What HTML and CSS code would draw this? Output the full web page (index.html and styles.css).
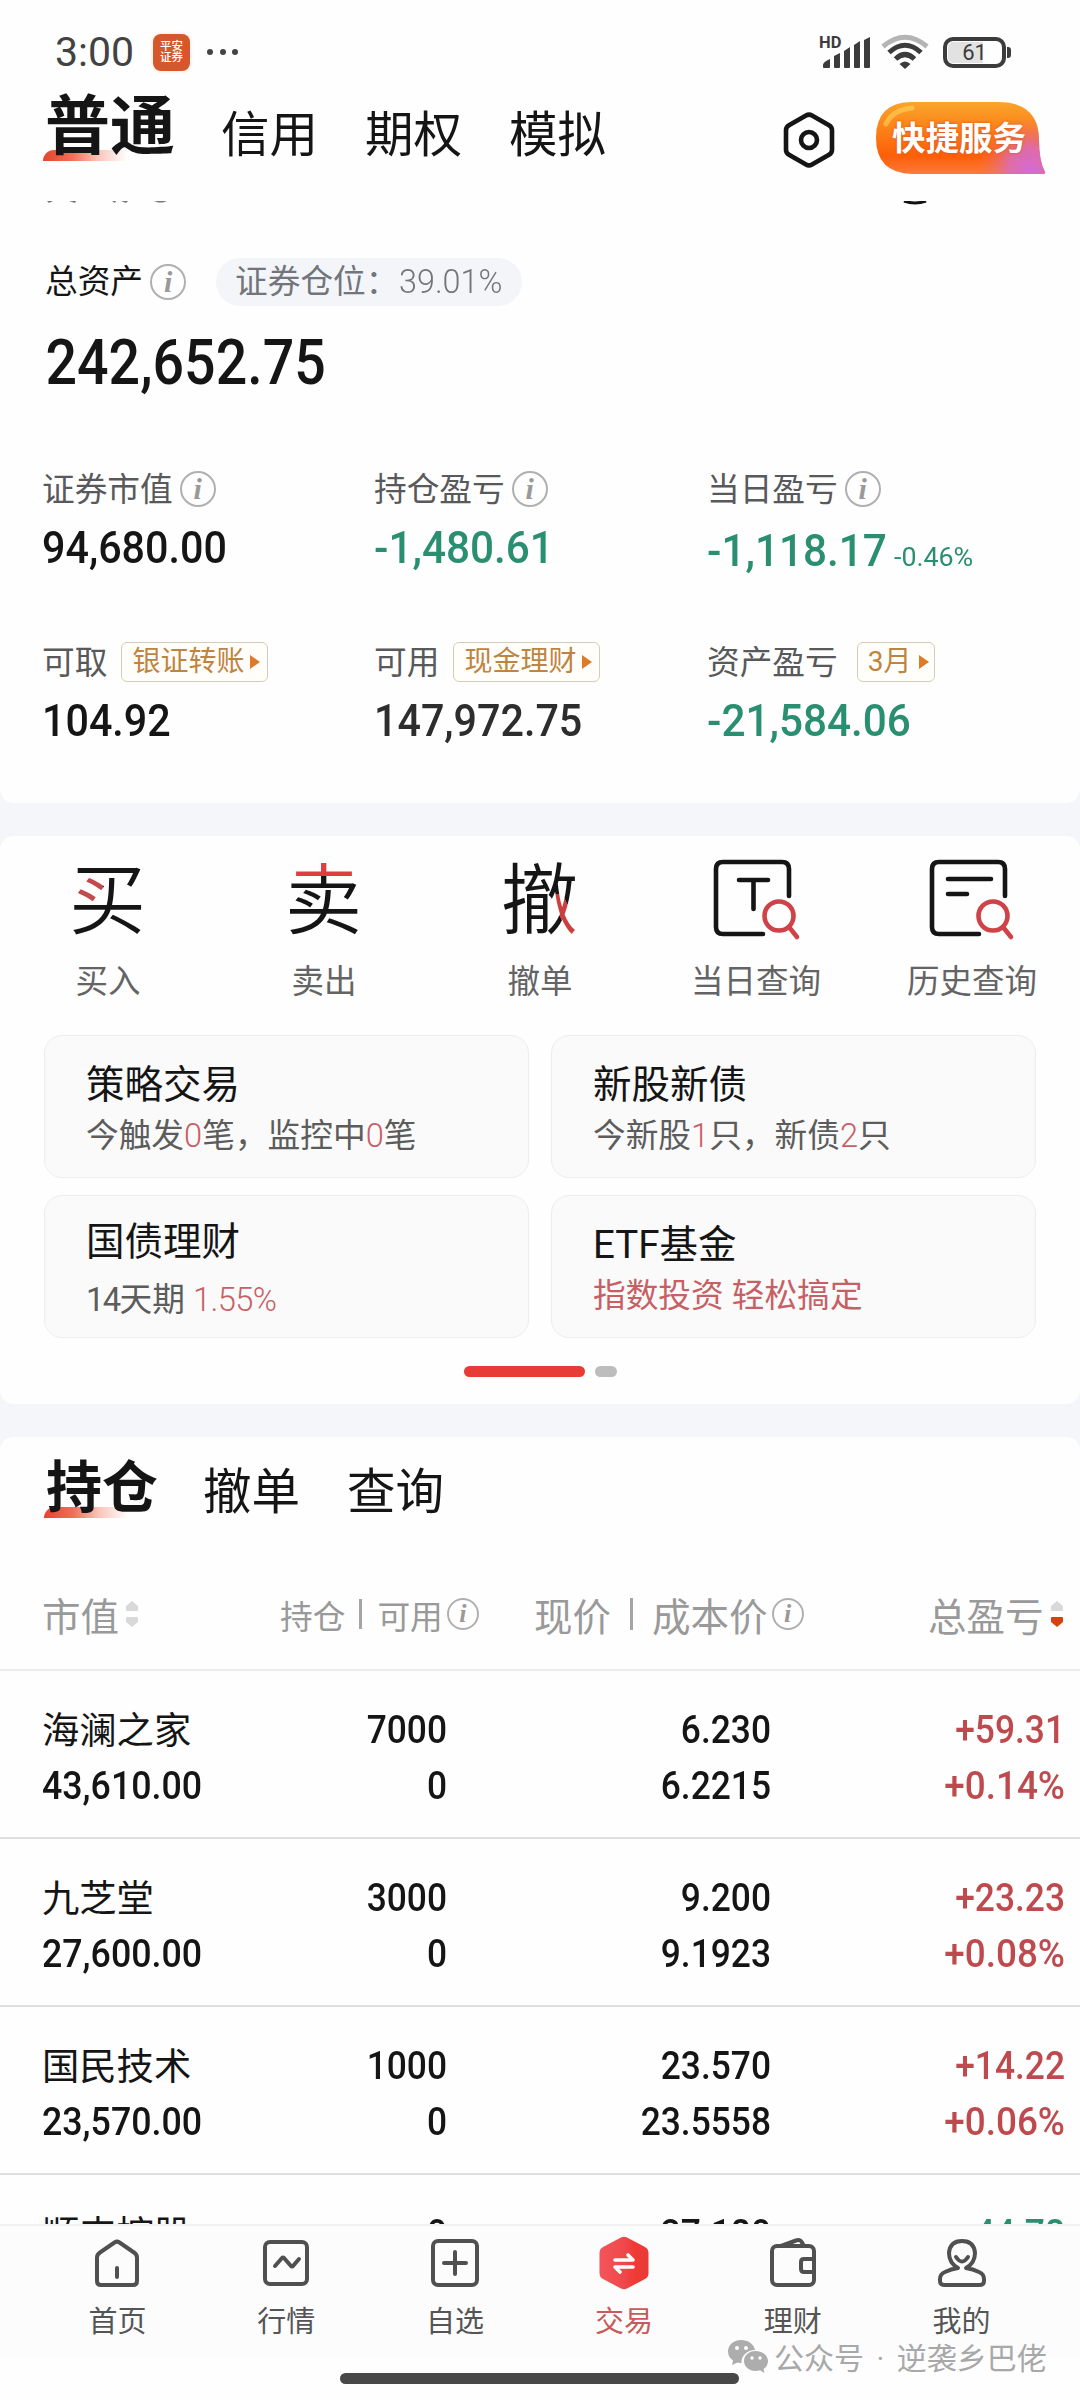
FILE: index.html
```html
<!DOCTYPE html>
<html lang="zh-CN">
<head>
<meta charset="utf-8">
<title>交易</title>
<link rel="stylesheet" href="styles.css">
</head>
<body>
<div class="phone">
  <header class="header">
    <div class="status">
      <span class="clock">3:00</span>
      <span class="app-icon"><span>平安</span><span>证券</span></span>
      <span class="more"><i></i><i></i><i></i></span>
      <span class="status-right">
        <svg class="signal" width="54" height="36" viewBox="0 0 54 36"><g fill="#3c3c3c"><path d="M4 31q0-3 7-6v8q0 1-1 1H5q-1 0-1-1zM15 22l6-3v14q0 1-1 1h-4q-1 0-1-1zM25 17l6-4v20q0 1-1 1h-4q-1 0-1-1zM35 11l6-4v26q0 1-1 1h-4q-1 0-1-1zM45 6l6-3v30q0 1-1 1h-4q-1 0-1-1z"/></g><text x="0" y="13.500" class="hd">HD</text></svg>
        <svg class="wifi" width="48" height="36" viewBox="0 0 48 36" fill="none" stroke-width="5"><path d="M2 12.500Q24-6 46 12.500" stroke="#b4b4b4"/><path d="M8 18.500Q24 4 40 18.500M14.500 25Q24 16 33.500 25" stroke="#3c3c3c"/><path d="M24 35l-5.500-5q5.500-5 11 0z" fill="#3c3c3c" stroke="none"/></svg>
        <span class="battery"><span>61</span></span>
      </span>
    </div>
    <nav class="account-tabs">
      <span class="tab tab-active">普通</span>
      <span class="tab">信用</span>
      <span class="tab">期权</span>
      <span class="tab">模拟</span>
      <svg class="hex" width="54" height="58" viewBox="0 0 54 58" fill="none" stroke="#151515" stroke-width="4.600"><path d="M24 4.500q3-1.700 6 0l17 9.700q3 1.700 3 5v19.600q0 3.300-3 5l-17 9.700q-3 1.700-6 0l-17-9.700q-3-1.700-3-5v-19.600q0-3.300 3-5z"/><circle cx="27" cy="29" r="8"/></svg>
      <span class="quick">
        <svg width="172" height="76" viewBox="0 0 172 76"><defs><linearGradient id="qa" x1="0" y1="0" x2="0" y2="1"><stop offset="0" stop-color="#f9a52c"/><stop offset=".35" stop-color="#fc8418"/><stop offset=".75" stop-color="#fd5f08"/><stop offset="1" stop-color="#fd7a3a"/></linearGradient><radialGradient id="qb" gradientUnits="userSpaceOnUse" cx="156" cy="68" r="52"><stop offset="0" stop-color="#d56ad0"/><stop offset=".4" stop-color="#da6cc0" stop-opacity=".85"/><stop offset="1" stop-color="#f07060" stop-opacity="0"/></radialGradient></defs><path d="M38 2H124Q165 2 165 40Q165 61 171 72Q172 74 168 74H38Q2 73 2 38Q2 2 38 2Z" fill="url(#qa)"/><path d="M38 2H124Q165 2 165 40Q165 61 171 72Q172 74 168 74H38Q2 73 2 38Q2 2 38 2Z" fill="url(#qb)"/><path d="M12 24Q18 10 38 8" fill="none" stroke="#ffd45e" stroke-width="5" stroke-linecap="round" opacity=".6"/></svg>
        <b>快捷服务</b>
      </span>
    </nav>
  </header>

  <main class="content">
    <section class="panel assets">
      <svg class="scrolled" width="1080" height="4" viewBox="0 0 1080 4"><path d="M47 0h6l-4 2zM69 0h7l-1 2zM112 0h4l-1 2zM121 0h7l-2 2zM154 0h13l-4 1.500h-5z" fill="#777"/><path d="M904 0Q915 4 926 0" fill="none" stroke="#111" stroke-width="3"/></svg>
      <div class="total-row"><span>总资产</span><i class="info">i</i><span class="pill">证券仓位：<span class="pill-num">39.01%</span></span></div>
      <div class="total num">242,652.75</div>
      <div class="stats">
        <div class="stat"><div class="label"><span>证券市值</span><i class="info">i</i></div><div class="value num">94,680.00</div></div>
        <div class="stat"><div class="label"><span>持仓盈亏</span><i class="info">i</i></div><div class="value num down">-1,480.61</div></div>
        <div class="stat"><div class="label"><span>当日盈亏</span><i class="info">i</i></div><div class="value-line"><span class="value num down">-1,118.17</span><span class="pct num down">-0.46%</span></div></div>
        <div class="stat"><div class="label"><span>可取</span><span class="tag">银证转账<i></i></span></div><div class="value num">104.92</div></div>
        <div class="stat"><div class="label"><span>可用</span><span class="tag">现金理财<i></i></span></div><div class="value num soft">147,972.75</div></div>
        <div class="stat"><div class="label"><span>资产盈亏</span><span class="tag tag-month">3月<i></i></span></div><div class="value num down">-21,584.06</div></div>
      </div>
    </section>

    <section class="panel trade">
      <div class="actions">
        <div class="action"><span class="glyph glyph-buy">买</span><span>买入</span></div>
        <div class="action"><span class="glyph glyph-sell">卖</span><span>卖出</span></div>
        <div class="action"><span class="glyph glyph-cancel">撤</span><span>撤单</span></div>
        <div class="action"><svg width="84" height="80" viewBox="0 0 84 80" fill="none" stroke-linecap="round" stroke-width="4.600"><path d="M75 36V9q0-7-7-7H9Q2 2 2 9v58q0 7 7 7h40M25 20h29M39.500 20v29" stroke="#151515"/><g stroke="#cf4247"><circle cx="65" cy="56" r="14.500"/><path d="M75 67l8 10"/></g></svg><span>当日查询</span></div>
        <div class="action"><svg width="84" height="80" viewBox="0 0 84 80" fill="none" stroke-linecap="round" stroke-width="4.600"><path d="M75 36V9q0-7-7-7H9Q2 2 2 9v58q0 7 7 7h40M18 19h43M18 34h19" stroke="#151515"/><g stroke="#cf4247"><circle cx="63" cy="56" r="14.500"/><path d="M73 67l8 10"/></g></svg><span>历史查询</span></div>
      </div>
      <div class="cards">
        <div class="card"><h3>策略交易</h3><p>今触发<em>0</em>笔，监控中<em>0</em>笔</p></div>
        <div class="card"><h3>新股新债</h3><p>今新股<em>1</em>只，新债<em>2</em>只</p></div>
        <div class="card card-bond"><h3>国债理财</h3><p><span>14</span>天期 <em>1.55%</em></p></div>
        <div class="card card-etf"><h3>ETF基金</h3><p><em>指数投资 轻松搞定</em></p></div>
      </div>
      <div class="pager"><i class="on"></i><i></i></div>
    </section>

    <section class="panel holdings">
      <nav class="sub-tabs"><span class="tab tab-active">持仓</span><span class="tab">撤单</span><span class="tab">查询</span></nav>
      <div class="thead">
        <span>市值<svg class="sort" width="14" height="28" viewBox="0 0 14 28" fill="#d9d9d9"><path d="M7 1l6 5v4q0 1-1 1H2q-1 0-1-1V6zM7 27l6-5v-4q0-1-1-1H2q-1 0-1 1v4z"/></svg></span>
        <span class="small">持仓<b></b>可用<i class="info info-s">i</i></span>
        <span>现价<b></b>成本价<i class="info info-s">i</i></span>
        <span>总盈亏<svg class="sort" width="14" height="28" viewBox="0 0 14 28"><path d="M7 1l6 5v4q0 1-1 1H2q-1 0-1-1V6z" fill="#d9d9d9"/><path d="M7 27l6-5v-4q0-1-1-1H2q-1 0-1 1v4z" fill="#d4430f"/></svg></span>
      </div>
      <div class="row"><span class="name">海澜之家</span><span class="num">7000</span><span class="num">6.230</span><span class="num up">+59.31</span><span class="num mv">43,610.00</span><span class="num">0</span><span class="num">6.2215</span><span class="num up rate">+0.14%</span></div>
      <div class="row"><span class="name">九芝堂</span><span class="num">3000</span><span class="num">9.200</span><span class="num up">+23.23</span><span class="num mv">27,600.00</span><span class="num">0</span><span class="num">9.1923</span><span class="num up rate">+0.08%</span></div>
      <div class="row"><span class="name">国民技术</span><span class="num">1000</span><span class="num">23.570</span><span class="num up">+14.22</span><span class="num mv">23,570.00</span><span class="num">0</span><span class="num">23.5558</span><span class="num up rate">+0.06%</span></div>
      <div class="row"><span class="name">顺丰控股</span><span class="num">0</span><span class="num">37.180</span><span class="num down">-44.78</span></div>
    </section>
  </main>

  <footer class="footer">
    <nav class="bottom-nav">
      <div class="nav-item"><svg width="56" height="56" viewBox="0 0 56 56"><path d="M25.500 7.500q2.500-1.700 5 0L45 17.500q3 2 3 5V46q0 4-4 4H12q-4 0-4-4V22.500q0-3 3-5zM28 33v9"/></svg><span>首页</span></div>
      <div class="nav-item"><svg width="56" height="56" viewBox="0 0 56 56"><rect x="7" y="7" width="42" height="42" rx="5"/><path d="M17 31l7-8q1-1 2 0l7 8q1 1 2 0l6-7"/></svg><span>行情</span></div>
      <div class="nav-item"><svg width="56" height="56" viewBox="0 0 56 56"><rect x="6" y="6" width="44" height="44" rx="5"/><path d="M28 17v22M17 28h22"/></svg><span>自选</span></div>
      <div class="nav-item current"><svg width="56" height="56" viewBox="0 0 56 56"><defs><linearGradient id="hx"><stop offset="0" stop-color="#f4555b"/><stop offset=".5" stop-color="#ef484b"/><stop offset=".72" stop-color="#f03a34"/><stop offset="1" stop-color="#e93a38"/></linearGradient></defs><path d="M25 2.500q3-1.500 6 0l18 9.500q3.500 2 3.500 6v20q0 4-3.500 6l-18 9.500q-3 1.500-6 0L7 44q-3.500-2-3.500-6V18q0-4 3.500-6z" fill="url(#hx)" stroke="none"/><path d="M19 25h18l-5-5M37 32H19l5 5" stroke="#fff" stroke-width="3.600"/></svg><span>交易</span></div>
      <div class="nav-item"><svg width="56" height="56" viewBox="0 0 56 56"><rect x="7" y="11" width="42" height="39" rx="5"/><path d="M16 11L31 5.500q4-1.500 6 2l2 3.500M49 24H39q-3 0-3 3v7q0 3 3 3h10"/></svg><span>理财</span></div>
      <div class="nav-item"><svg width="56" height="56" viewBox="0 0 56 56"><path d="M24 33Q15 28 15 18Q16 6 28 6T41 18Q41 28 32 33Q39 34 45 37Q50 39 50 44V46Q50 50 45 50H11Q6 50 6 46V44Q6 39 11 37Q17 34 24 33M22 22Q28 31 34 22"/></svg><span>我的</span></div>
    </nav>
    <div class="home-bar"></div>
    <div class="watermark"><svg width="42" height="34" viewBox="0 0 42 34"><path d="M14 1C6.500 1 1 6 1 12.500c0 3.800 2 7 5 9L5 26l5.500-2.500q2 .5 4 .5c-.5-7 5.500-13 13.500-13C27 5 21 1 14 1z" fill="#adadad"/><path d="M28.500 12C22 12 17 16.500 17 22s5 10 11.500 10q2.500 0 4.500-.8L37.500 34l-1-4q4.500-3 4.500-8c0-5.500-5.500-10-12.500-10z" fill="#adadad"/><g fill="#fff"><circle cx="10" cy="9" r="2"/><circle cx="19" cy="9" r="2"/><circle cx="25" cy="19" r="1.700"/><circle cx="33" cy="19" r="1.700"/></g></svg><span>公众号 · 逆袭乡巴佬</span></div>
  </footer>
</div>
</body>
</html>
```
FILE: styles.css
```css
* { box-sizing: border-box; margin: 0; padding: 0; }
body { width: 1080px; height: 2400px; overflow: hidden; background: #f4f6fa; font-family: Roboto, "Noto Sans CJK SC", sans-serif; color: #151515; }
i, em { font-style: normal; }
svg { display: block; flex: none; overflow: visible; }
.phone { width: 1080px; height: 2400px; display: flex; flex-direction: column; overflow: hidden; }

.header { height: 201px; flex: none; background: #fefefe; }
.status { height: 81px; padding: 23px 74px 0 55px; display: flex; align-items: center; }
.clock { width: 98px; font-size: 41px; line-height: 58px; color: #424242; }
.app-icon { width: 37px; height: 37px; border-radius: 8px; background: #d5582d; color: #fff; display: flex; flex-direction: column; align-items: center; justify-content: center; font-size: 11.500px; line-height: 11.500px; font-weight: 500; box-shadow: 0 0 4px #fbe3d2; }
.more { display: flex; gap: 6.500px; margin-left: 17px; }
.more i { width: 6px; height: 6px; border-radius: 50%; background: #444; }
.status-right { display: flex; align-items: center; margin-left: auto; }
.hd { font-size: 16.500px; font-weight: 700; fill: #3c3c3c; }
.signal { margin-right: 8px; }
.battery { width: 63px; height: 31px; border: 4px solid #3c3c3c; border-radius: 10px; margin-left: 14px; background: linear-gradient(90deg, #e2e2e2 36px, #fefefe 36px); background-clip: content-box; padding: 1px; position: relative; text-align: center; font-size: 22px; line-height: 21px; color: #3c3c3c; }
.battery::after { content: ""; position: absolute; right: -9px; top: 6px; width: 4px; height: 11px; border-radius: 0 3px 3px 0; background: #3c3c3c; }

.account-tabs { height: 120px; padding-left: 45px; display: flex; align-items: flex-start; }
.tab { font-size: 48.500px; line-height: 60px; white-space: nowrap; }
.tab-active { font-weight: 700; position: relative; z-index: 0; }
.tab-active::after { content: ""; position: absolute; z-index: -1; left: -2px; width: 84px; height: 11px; border-radius: 12px 0 0 0; background: linear-gradient(90deg, #e5432a, #f07058 35%, #f9c4b8 65%, rgba(255,240,235,0)); }
.account-tabs .tab { margin-top: 25px; margin-right: 47px; }
.account-tabs .tab-active { font-size: 65px; line-height: 80px; margin-top: 6px; margin-right: 46px; }
.account-tabs .tab-active::after { top: 63px; }
.hex { margin: 30px 0 0 129px; }
.quick { position: relative; width: 172px; margin: 19px 0 0 38px; flex: none; }
.quick b { position: absolute; left: 18px; top: 18px; font-size: 33.500px; line-height: 42px; color: #fff; white-space: nowrap; text-shadow: 0 0 3px #d9501f; }

.content { flex: 1; min-height: 0; overflow: hidden; display: flex; flex-direction: column; }
.panel { background: #fefefe; flex: none; }
.num { font-weight: 500; white-space: nowrap; transform-origin: 0 50%; }
.down { color: #2a8f70; }
.up { color: #bf4a4e; }
.info { width: 36px; height: 36px; border: 2px solid #b0b0b0; border-radius: 50%; font: italic 700 30px/31px "Liberation Serif", serif; color: #999; text-align: center; margin-left: 7px; flex: none; }

.assets { height: 602px; border-radius: 0 0 14px 14px; position: relative; padding: 57px 0 0 42px; }
.scrolled { position: absolute; left: 0; top: 0; }
.total-row { display: flex; align-items: center; height: 48px; padding-left: 3px; font-size: 32.700px; line-height: 44px; }
.total-row .info { margin: 0 0 1px 7px; }
.pill { display: flex; align-items: center; margin-left: 30px; height: 48px; width: 306px; padding-left: 19px; border-radius: 24px; background: #f4f5f9; color: #72757c; white-space: nowrap; }
.pill-num { font-weight: 300; font-size: 33px; transform: scaleX(.98); transform-origin: 0 50%; }
.total { margin-top: 25px; padding-left: 4px; font-size: 63px; line-height: 64px; transform: scaleX(.881); }
.stats { margin-top: 76px; display: grid; grid-template-columns: 332px 333px 1fr; row-gap: 67px; }
.stat { height: 106px; }
.label { height: 40px; display: flex; align-items: center; font-size: 32.700px; line-height: 38px; color: #58595b; white-space: nowrap; margin-top: -2px; }
.label > span:first-child { padding-top: 2px; }
.value { margin-top: 9px; font-size: 45px; line-height: 60px; transform: scaleX(.917); }
.value.down { transform: scaleX(.94); }
.soft { color: #2d2d2d; }
.value-line { display: flex; align-items: baseline; padding-top: 3px; }
.value-line .value { width: 187px; }
.pct { font-size: 26px; font-weight: 400; transform: scaleX(1.03); }
.tag { display: flex; align-items: center; width: 147px; height: 40px; margin-left: 14px; padding-left: 10px; border: 1.500px solid #d3cdb8; border-radius: 6px; background: #fffefa; color: #bf8440; font-size: 28px; }
.tag i { margin-left: 6px; border-left: 10px solid #df7a26; border-top: 7px solid transparent; border-bottom: 7px solid transparent; }
.tag-month { width: 78px; margin-left: 19px; }
.tag-month i { margin-left: 7px; }

.trade { margin-top: 33px; height: 568px; border-radius: 14px; padding-top: 24px; }
.actions { display: grid; grid-template-columns: repeat(5, 216px); }
.action { display: flex; flex-direction: column; align-items: center; font-size: 32.500px; line-height: 40px; color: #646464; gap: 22px; }
.action svg { height: 80px; }
.glyph { width: 76px; height: 80px; margin-left: -2px; font-size: 77px; line-height: 84px; font-weight: 350; color: transparent; background-color: #151515; background-repeat: no-repeat; -webkit-background-clip: text; background-clip: text; }
.glyph-buy { background-image: linear-gradient(#c24a4e, #c24a4e); background-size: 34px 27px; background-position: 0 16px; }
.glyph-sell { background-image: linear-gradient(#df3d42, #df3d42); background-size: 76px 16px; background-position: 0 0; }
/* red band over the falling stroke at the right of the character */
.glyph-cancel { background-image: linear-gradient(66deg, transparent 0 14px, #cc3f3f 14px 26px, transparent 26px); background-size: 24px 44px; background-position: 53px 34px; }
.cards { margin: 33px 0 0 44px; display: grid; grid-template-columns: 485px 485px; grid-auto-rows: 143px; gap: 17px 22px; }
.card { border: 1.500px solid #ededed; border-radius: 18px; background: #fafafa; padding: 24px 0 0 41px; }
.card h3 { font-size: 38.500px; line-height: 50px; font-weight: 400; }
.card p { margin-top: 6px; font-size: 32.700px; line-height: 40px; color: #5c5c5c; white-space: nowrap; }
.card em { color: #c75f65; font-weight: 300; }
.card-bond { padding-top: 21px; }
.card-bond p { margin-top: 13px; }
.card-bond p span { letter-spacing: -1.600px; }
.card-bond p em { letter-spacing: -.6px; }
.card-etf em { font-weight: 400; }
.pager { margin-top: 28px; display: flex; justify-content: center; gap: 10px; }
.pager i { width: 22px; height: 11px; border-radius: 6px; background: #bdbdbd; }
.pager .on { width: 121px; background: #e83a36; }

.holdings { margin-top: 33px; border-radius: 14px 14px 0 0; flex: 1; }
.sub-tabs { height: 130px; padding-left: 46px; display: flex; }
.sub-tabs .tab { margin: 26px 47px 0 0; }
.sub-tabs .tab-active { font-size: 56px; line-height: 70px; margin-top: 16px; margin-right: 45px; }
.sub-tabs .tab-active::after { top: 54px; }
.thead { height: 104px; padding: 0 0 8px 42px; border-bottom: 2px solid #ececec; display: grid; grid-template-columns: 238px 254px 394px 1fr; align-items: center; font-size: 38.500px; color: #999; }
.thead > span { display: flex; align-items: center; height: 50px; white-space: nowrap; }
.thead b { width: 3px; height: 32px; background: #a5a5a5; margin: 0 19px 0 19px; }
.thead .small { font-size: 32.700px; }
.thead .small b { margin: 0 15px 0 14px; height: 30px; }
.info-s { width: 32px; height: 32px; font-size: 26px; line-height: 27px; margin-left: 4px; }
.sort { margin-left: 6px; }
.row { height: 168px; padding: 31px 0 0 42px; border-bottom: 2px solid #e0e0e0; display: grid; grid-template-columns: 251px 154px 324px 294px; grid-auto-rows: 56px; align-content: start; line-height: 56px; font-size: 38px; text-align: right; }
.row .name { font-size: 37.300px; text-align: left; padding-top: 1px; }
.row .num { transform: scaleX(.93); transform-origin: 100% 50%; }
.row .rate { transform: scaleX(.97); }
.row .mv { text-align: left; transform: scaleX(.94); transform-origin: 0 50%; }

.footer { height: 176px; flex: none; background: #fefefe; position: relative; }
.bottom-nav { height: 133px; background: #fcfcfc; border-top: 2px solid #f1f1f1; padding: 9px 34px 0 33px; display: grid; grid-template-columns: repeat(6, 1fr); }
.nav-item { display: flex; flex-direction: column; align-items: center; font-size: 29px; line-height: 40px; color: #555; gap: 11px; }
.nav-item svg { fill: none; stroke: #505050; stroke-width: 4; stroke-linecap: round; stroke-linejoin: round; }
.current { color: #c75a5a; }
.home-bar { width: 399px; height: 11px; border-radius: 6px; background: #484848; margin: 16px 0 0 340px; }
.watermark { position: absolute; left: 727px; top: 112px; display: flex; align-items: center; height: 40px; gap: 5px; font-size: 30px; word-spacing: 5px; color: #a8a8a8; white-space: nowrap; }
```
